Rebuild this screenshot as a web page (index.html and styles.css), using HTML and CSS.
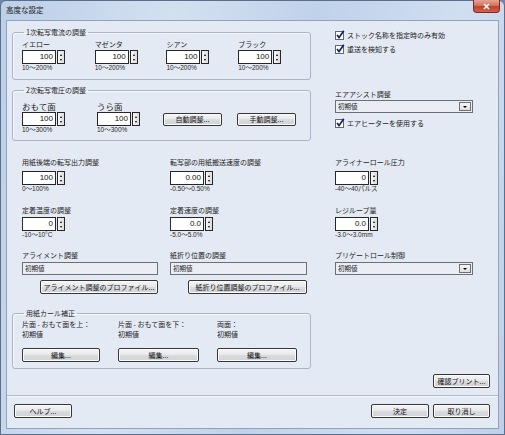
FILE: index.html
```html
<!DOCTYPE html>
<html lang="ja">
<head>
<meta charset="utf-8">
<title>高度な設定</title>
<link rel="stylesheet" href="styles.css">
</head>
<body>
<div class="window">
  <div class="titlebar">
    <span class="title">高度な設定</span>
    <div class="close"><svg width="9" height="7" viewBox="0 0 9 7"><path d="M2 1 L7 6 M7 1 L2 6" stroke="#fff" stroke-width="1.6"/></svg></div>
  </div>
  <div class="client">
    <div class="body">
      <div class="top">
        <div class="left">
          <fieldset class="group g1">
            <legend>1次転写電流の調整</legend>
            <div class="g1-row">
              <div class="field w75"><div class="lbl">イエロー</div><div class="spin s1"><span class="val">100</span><span class="sbtn"><i class="up"></i><i class="dn"></i></span></div><div class="range">10〜200%</div></div>
              <div class="field w74"><div class="lbl">マゼンタ</div><div class="spin s1"><span class="val">100</span><span class="sbtn"><i class="up"></i><i class="dn"></i></span></div><div class="range">10〜200%</div></div>
              <div class="field w74"><div class="lbl">シアン</div><div class="spin s1"><span class="val">100</span><span class="sbtn"><i class="up"></i><i class="dn"></i></span></div><div class="range">10〜200%</div></div>
              <div class="field w74"><div class="lbl">ブラック</div><div class="spin s1"><span class="val">100</span><span class="sbtn"><i class="up"></i><i class="dn"></i></span></div><div class="range">10〜200%</div></div>
            </div>
          </fieldset>
          <fieldset class="group g2">
            <legend>2次転写電圧の調整</legend>
            <div class="g2-row">
              <div class="field w75"><div class="lbl big">おもて面</div><div class="spin s1"><span class="val">100</span><span class="sbtn"><i class="up"></i><i class="dn"></i></span></div><div class="range">10〜300%</div></div>
              <div class="field w66"><div class="lbl big">うら面</div><div class="spin s1"><span class="val">100</span><span class="sbtn"><i class="up"></i><i class="dn"></i></span></div><div class="range">10〜300%</div></div>
              <div class="btn g2btn">自動調整...</div>
              <div class="btn g2btn g2btn2">手動調整...</div>
            </div>
          </fieldset>
        </div>
        <div class="right">
          <div class="cb cb1"><svg width="10" height="10" viewBox="0 0 10 10"><rect x="0.5" y="1.5" width="8" height="8" fill="#fff" stroke="#5d6778"/><path d="M2 5 L4 7.6 L8.8 0.8" stroke="#16255a" stroke-width="1.7" fill="none"/></svg><span>ストック名称を指定時のみ有効</span></div>
          <div class="cb cb2"><svg width="10" height="10" viewBox="0 0 10 10"><rect x="0.5" y="1.5" width="8" height="8" fill="#fff" stroke="#5d6778"/><path d="M2 5 L4 7.6 L8.8 0.8" stroke="#16255a" stroke-width="1.7" fill="none"/></svg><span>重送を検知する</span></div>
          <div class="lbl air-lbl">エアアシスト調整</div>
          <div class="sel air-sel"><span class="sel-text">初期値</span><span class="sel-btn"><i class="dn"></i></span></div>
          <div class="cb cb3"><svg width="10" height="10" viewBox="0 0 10 10"><rect x="0.5" y="1.5" width="8" height="8" fill="#fff" stroke="#5d6778"/><path d="M2 5 L4 7.6 L8.8 0.8" stroke="#16255a" stroke-width="1.7" fill="none"/></svg><span>エアヒーターを使用する</span></div>
        </div>
      </div>

      <div class="rows r3">
        <div class="field"><div class="lbl">用紙後端の転写出力調整</div><div class="spin s3"><span class="val">100</span><span class="sbtn"><i class="up"></i><i class="dn"></i></span></div><div class="range">0〜100%</div></div>
        <div class="field"><div class="lbl">転写部の用紙搬送速度の調整</div><div class="spin s3"><span class="val">0.00</span><span class="sbtn"><i class="up"></i><i class="dn"></i></span></div><div class="range">-0.50〜0.50%</div></div>
        <div class="field"><div class="lbl">アライナーロール圧力</div><div class="spin s3"><span class="val">0</span><span class="sbtn"><i class="up"></i><i class="dn"></i></span></div><div class="range">-40〜40パルス</div></div>
      </div>

      <div class="rows r4">
        <div class="field"><div class="lbl">定着温度の調整</div><div class="spin s4"><span class="val">0</span><span class="sbtn"><i class="up"></i><i class="dn"></i></span></div><div class="range">-10〜10°C</div></div>
        <div class="field"><div class="lbl">定着速度の調整</div><div class="spin s4"><span class="val">0.0</span><span class="sbtn"><i class="up"></i><i class="dn"></i></span></div><div class="range">-5.0〜5.0%</div></div>
        <div class="field"><div class="lbl">レジループ量</div><div class="spin s4"><span class="val">0.0</span><span class="sbtn"><i class="up"></i><i class="dn"></i></span></div><div class="range">-3.0〜3.0mm</div></div>
      </div>

      <div class="rows r5">
        <div class="field"><div class="lbl">アライメント調整</div><div class="tf tf1">初期値</div><div class="btn prof prof1">アライメント調整のプロファイル...</div></div>
        <div class="field"><div class="lbl">紙折り位置の調整</div><div class="tf tf2">初期値</div><div class="btn prof prof2">紙折り位置調整のプロファイル...</div></div>
        <div class="field"><div class="lbl">プリゲートロール制御</div><div class="sel pre-sel"><span class="sel-text">初期値</span><span class="sel-btn"><i class="dn"></i></span></div></div>
      </div>

      <fieldset class="group curl">
        <legend>用紙カール補正</legend>
        <div class="curl-row">
          <div class="cfield"><div class="lbl">片面 - おもて面を上：</div><div class="lbl cval">初期値</div><div class="btn ebtn e1">編集...</div></div>
          <div class="cfield"><div class="lbl">片面 - おもて面を下：</div><div class="lbl cval">初期値</div><div class="btn ebtn e2">編集...</div></div>
          <div class="cfield"><div class="lbl">両面：</div><div class="lbl cval">初期値</div><div class="btn ebtn e3">編集...</div></div>
        </div>
      </fieldset>

      <div class="confirm-row"><div class="btn confirm">確認プリント...</div></div>
    </div>
    <div class="footer">
      <div class="btn help">ヘルプ...</div>
      <div class="spacer"></div>
      <div class="btn ok">決定</div>
      <div class="btn cancel">取り消し</div>
    </div>
  </div>
</div>
</body>
</html>
```

FILE: styles.css
```css
html, body {
  margin: 0;
  padding: 0;
}
body {
  width: 505px;
  height: 435px;
  overflow: hidden;
  font-family: "Noto Sans CJK JP", "Noto Sans", sans-serif;
  color: #1c1c1c;
  background: #6f87a6;
}
.window {
  width: 505px;
  height: 435px;
  box-sizing: border-box;
  border: 1px solid #5b6f8c;
  border-radius: 6px 6px 0 0;
  background: linear-gradient(100deg, #bccfe7 0%, #d3e0f0 30%, #c0d2e9 55%, #d0def0 80%, #bed0e8 100%);
  padding: 0 5px 5px 5px;
  display: flex;
  flex-direction: column;
}
.titlebar {
  height: 19px;
  display: flex;
  align-items: flex-start;
  justify-content: space-between;
}
.title {
  font-size: 7.5px;
  line-height: 9px;
  margin-top: 4px;
  color: #1a1a1a;
}
.close {
  width: 27px;
  height: 13px;
  box-sizing: border-box;
  margin-top: -1px;
  margin-right: -1px;
  border: 1px solid #7d2b22;
  border-top: 0;
  border-radius: 0 0 4px 4px;
  background: linear-gradient(#e7a493 0%, #d7735f 45%, #c0412c 55%, #d0624a 100%);
  display: flex;
  align-items: center;
  justify-content: center;
}
.client {
  flex: 1;
  border: 1px solid #8fa3bd;
  background: #e4eaf3;
  display: flex;
  flex-direction: column;
}
.body {
  padding: 7px 8px 0 5px;
}
.top {
  display: flex;
}
.left {
  width: 299px;
  display: flex;
  flex-direction: column;
}
.group {
  margin: 0;
  padding: 0;
  min-width: 0;
  border: 1px solid #a8b6c9;
  border-radius: 3px;
  box-shadow: inset 1px 1px 0 #f6f8fb;
}
.group legend {
  padding: 0 2px;
  margin-left: 2px;
  font-size: 7px;
  line-height: 8px;
  color: #1c1c1c;
}
.g1 {
  padding: 4px 0 7px 9px;
}
.g1-row, .g2-row {
  display: flex;
  align-items: flex-start;
}
.g2 {
  margin-top: 6px;
  padding: 8px 0 6px 9px;
}
.w75 { width: 75px; }
.w74 { width: 74px; }
.w66 { width: 66px; }
.lbl {
  font-size: 7px;
  line-height: 9px;
  white-space: nowrap;
  color: #1c1c1c;
}
.lbl.big {
  font-size: 8.5px;
}
.range {
  font-family: "Liberation Sans", "Noto Sans CJK JP", sans-serif;
  font-size: 6.5px;
  line-height: 8px;
  color: #2a2a2a;
  white-space: nowrap;
}
.spin {
  display: flex;
  width: 43px;
  height: 14px;
}
.s1 { margin-top: 1px; }
.s3 { margin-top: 4px; }
.s4 { margin-top: 2px; }
.spin .val {
  flex: 1;
  box-sizing: border-box;
  background: #fff;
  border: 1px solid #262626;
  text-align: right;
  padding-right: 2px;
  font-family: "Liberation Sans", sans-serif;
  font-size: 8px;
  line-height: 12px;
  color: #111;
}
.spin .sbtn {
  width: 8px;
  box-sizing: border-box;
  margin-left: 1px;
  border: 1px solid #262626;
  background: linear-gradient(90deg, #f7f7f7, #dcdcdc);
  display: flex;
  flex-direction: column;
  justify-content: space-around;
  align-items: center;
  padding: 1px 0;
}
.up {
  display: block;
  width: 0;
  height: 0;
  border-left: 1.5px solid transparent;
  border-right: 1.5px solid transparent;
  border-bottom: 2px solid #000;
}
.dn {
  display: block;
  width: 0;
  height: 0;
  border-left: 1.5px solid transparent;
  border-right: 1.5px solid transparent;
  border-top: 2px solid #000;
}
.btn {
  box-sizing: border-box;
  height: 14px;
  border: 1px solid #363636;
  border-radius: 2px;
  background: linear-gradient(#f3f3f4 0%, #e9eaec 45%, #d9dbdf 52%, #cfd2d7 100%);
  box-shadow: inset 0 0 0 1px #fbfbfb;
  font-size: 7px;
  line-height: 12px;
  text-align: center;
  white-space: nowrap;
  color: #141414;
}
.g2btn {
  width: 59px;
  height: 13px;
  line-height: 11px;
  margin-top: 11px;
}
.g2btn2 {
  margin-left: 15px;
}
.right {
  margin-left: 24px;
  width: 140px;
  display: flex;
  flex-direction: column;
}
.cb {
  display: flex;
  align-items: center;
  height: 10px;
  font-size: 7px;
  line-height: 10px;
  white-space: nowrap;
}
.cb svg {
  display: block;
  margin-right: 2px;
}
.cb1 { margin-top: 2px; }
.cb2 { margin-top: 4px; }
.cb3 { margin-top: 5px; }
.air-lbl { margin-top: 36px; }
.air-sel { margin-top: 1px; }
.sel {
  box-sizing: border-box;
  width: 138px;
  height: 13px;
  border: 1px solid #6b6f76;
  background: #eaeef4;
  display: flex;
  align-items: center;
  padding: 1px;
}
.sel-text {
  flex: 1;
  font-size: 6.5px;
  line-height: 9px;
  padding-left: 1px;
}
.sel-btn {
  box-sizing: border-box;
  width: 12px;
  height: 9px;
  border: 1px solid #707070;
  background: linear-gradient(#f7f7f7, #dedede);
  display: flex;
  align-items: center;
  justify-content: center;
}
.sel-btn .dn {
  border-left-width: 2px;
  border-right-width: 2px;
  border-top-width: 2.5px;
}
.rows {
  display: grid;
  grid-template-columns: 148px 165px 138px;
  margin-left: 10px;
}
.r3 { margin-top: 17px; }
.r4 { margin-top: 13px; }
.r5 { margin-top: 12px; }
.tf {
  box-sizing: border-box;
  height: 13px;
  margin-top: 2px;
  border: 1px solid #6b6f76;
  background: #eaeef4;
  font-size: 6.5px;
  line-height: 11px;
  padding-left: 2px;
}
.tf1 { width: 136px; }
.tf2 { width: 137px; }
.pre-sel { margin-top: 2px; }
.prof {
  margin-top: 5px;
  margin-left: 18px;
}
.prof1 { width: 118px; }
.prof2 { width: 119px; }
.curl {
  width: 299px;
  box-sizing: border-box;
  margin-top: 15px;
  padding: 3px 0 6px 9px;
}
.curl-row {
  display: grid;
  grid-template-columns: 96px 99px 1fr;
}
.cval {
  margin-top: 1px;
}
.ebtn {
  margin-top: 9px;
}
.e1 { width: 78px; }
.e2 { width: 81px; }
.e3 { width: 80px; }
.confirm-row {
  display: flex;
  justify-content: flex-end;
  margin-top: 5px;
}
.confirm {
  width: 57px;
}
.footer {
  flex: 1;
  margin-top: 7px;
  border-top: 1px solid #aebbcc;
  box-shadow: inset 0 1px 0 #f7f9fc;
  display: flex;
  align-items: flex-start;
  padding: 8px 8px 0 7px;
}
.spacer { flex: 1; }
.help { width: 58px; }
.ok { width: 58px; }
.cancel { width: 57px; margin-left: 4px; }
```
